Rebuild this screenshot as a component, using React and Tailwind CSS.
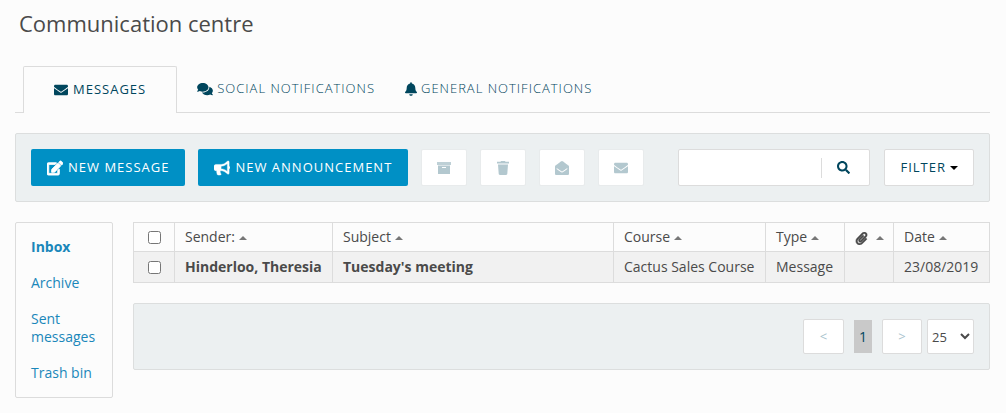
import { FaEnvelope, FaComments, FaBell, FaEdit, FaBullhorn, FaEnvelopeOpen, FaSearch, FaPaperclip } from "react-icons/fa";

const TABS = [
  { label: "Social notifications", Icon: FaComments, size: "w-4 h-3.5" },
  { label: "General notifications", Icon: FaBell, size: "w-3 h-3.5" },
];

const PRIMARY = [
  { label: "New message", Icon: FaEdit, look: "stroke-[28px]" },
  { label: "New announcement", Icon: FaBullhorn, look: "stroke-[14px]" },
];

const ACTIONS = [
  { label: "Archive", Icon: ArchiveBox },
  { label: "Delete", Icon: TrashCan },
  { label: "Mark as read", Icon: FaEnvelopeOpen },
  { label: "Mark as unread", Icon: FaEnvelope },
];

const COLUMNS = ["Sender:", "Subject", "Course", "Type", "clip", "Date"];

function ArchiveBox({ className }) {
  return (
    <svg className={className} viewBox="0 0 14 14" fill="currentColor" aria-hidden="true">
      <path d="M0 1h14v3H0z" opacity=".85" />
      <path fillRule="evenodd" d="M1 4.6h12V13H1zM5 6v1h4V6z" />
    </svg>
  );
}

function TrashCan({ className }) {
  return (
    <svg className={className} viewBox="0 0 14 14" fill="currentColor" aria-hidden="true">
      <path d="M4.5.8 5 0h4l.5.8H13v1.8H1V.8zM2 3.6h10l-.7 9.2c0 .7-.5 1.2-1.2 1.2H3.9c-.7 0-1.2-.5-1.2-1.2z" />
    </svg>
  );
}

function SortUp() {
  return (
    <svg className="ml-1 inline-block h-[5px] w-2 align-middle text-[#777]" viewBox="0 0 8 5" fill="currentColor" aria-hidden="true">
      <path d="M4 0 8 4H0z" />
    </svg>
  );
}

export default function App() {
  return (
    <main className="min-h-screen bg-[#fcfcfc] pt-[7px] pr-4 pb-4 pl-[15px] font-['Open_Sans',sans-serif] text-sm text-[#4a4a4a]">
      <h1 className="px-1 text-[22px] leading-8">Communication centre</h1>

      <nav className="mt-[27px] flex h-[47px] items-stretch border-b border-[#dcdcdc] pl-2 text-[13px] uppercase tracking-[1px] text-[#00465d]">
        <a href="#messages" aria-current="page" className="-mb-px flex items-center gap-[5px] rounded-t-xs border border-b-0 border-[#dcdcdc] bg-[#fcfcfc] px-[30px] pb-px">
          <FaEnvelope className="size-3.5" />
          Messages
        </a>
        <div className="flex gap-[30px] pl-5 font-light">
          {TABS.map(({ label, Icon, size }) => (
            <a key={label} href="#notifications" className="flex items-center gap-1 pb-px">
              <Icon className={size} />
              {label}
            </a>
          ))}
        </div>
      </nav>

      <section className="mt-5 flex items-center justify-between rounded-xs border border-[#dcdede] bg-[#ecf0f1] p-[15px]">
        <div className="flex items-center gap-[13px]">
          {PRIMARY.map(({ label, Icon, look }) => (
            <button key={label} type="button" className="flex h-[37px] items-center gap-[5px] rounded-xs bg-[#0090c5] px-4 text-[13px] font-medium uppercase tracking-[1px] text-white">
              <Icon className={`size-4 ${look}`} />
              {label}
            </button>
          ))}
          {ACTIONS.map(({ label, Icon }) => (
            <button key={label} type="button" aria-label={label} className="flex h-[37px] w-[46px] items-center justify-center rounded-xs border border-[#e8ebec] bg-white text-[#b3c8cf]">
              <Icon className="size-3.5" />
            </button>
          ))}
        </div>
        <div className="flex items-center gap-3.5">
          <div className="flex h-[37px] w-48 items-center rounded-xs border border-[#dcdcdc] bg-white">
            <input type="search" aria-label="Search messages" className="h-full min-w-0 flex-1 px-2 outline-none" />
            <button type="button" aria-label="Search" className="flex h-5 w-12 items-center justify-center border-l border-[#dcdcdc] pr-1 text-[#00465d]">
              <FaSearch className="size-[13px]" />
            </button>
          </div>
          <button type="button" className="flex h-[37px] items-center gap-1 rounded-xs border border-[#dcdcdc] bg-white px-[15px] text-[13px] uppercase tracking-[1px] text-[#00465d]">
            Filter
            <svg className="h-1 w-2 text-black" viewBox="0 0 8 4" fill="currentColor" aria-hidden="true">
              <path d="M0 0h8L4 4z" />
            </svg>
          </button>
        </div>
      </section>

      <div className="mt-5 flex items-start gap-5">
        <aside className="w-[98px] shrink-0 rounded-xs border border-[#dcdcdc] p-[15px] pr-2 leading-[18px] text-[#1a87ba]">
          <ul className="flex flex-col gap-[18px]">
            <li><a href="#inbox" className="font-bold">Inbox</a></li>
            <li><a href="#archive">Archive</a></li>
            <li><a href="#sent">Sent messages</a></li>
            <li><a href="#trash">Trash bin</a></li>
          </ul>
        </aside>

        <div className="min-w-0 flex-1">
          <table className="w-full table-fixed border-collapse text-left [&_td]:border [&_td]:border-[#dcdcdc] [&_td]:px-2.5 [&_th]:border [&_th]:border-[#dcdcdc] [&_th]:px-2.5 [&_th]:font-normal">
            <colgroup>
              <col className="w-[41px]" />
              <col className="w-[158px]" />
              <col />
              <col className="w-38" />
              <col className="w-[79px]" />
              <col className="w-[49px]" />
              <col className="w-24" />
            </colgroup>
            <thead>
              <tr className="h-[29px]">
                <th><input type="checkbox" aria-label="Select all messages" className="mx-auto block size-[13px]" /></th>
                {COLUMNS.map((column) => (
                  <th key={column} className="whitespace-nowrap">
                    {column === "clip" ? <FaPaperclip className="mr-1 inline size-[13px] stroke-[16px]" aria-label="Attachment" /> : column}
                    <SortUp />
                  </th>
                ))}
              </tr>
            </thead>
            <tbody>
              <tr className="h-[31px] whitespace-nowrap bg-[#f1f1f1]">
                <td><input type="checkbox" aria-label="Select Tuesday's meeting" className="mx-auto block size-[13px]" /></td>
                <td className="font-bold">Hinderloo, Theresia</td>
                <td className="font-bold">Tuesday's meeting</td>
                <td>Cactus Sales Course</td>
                <td>Message</td>
                <td />
                <td>23/08/2019</td>
              </tr>
            </tbody>
          </table>

          <div className="mt-5 flex items-center justify-end rounded-xs border border-[#dcdede] bg-[#ecf0f1] p-[15px] text-[13px]">
            <button type="button" aria-label="Previous page" className="h-[35px] w-[41px] rounded-xs border border-[#dcdcdc] bg-white text-[#a9c3cd]">&lt;</button>
            <span className="mx-2.5 flex h-[33px] w-[18px] items-center justify-center bg-[#c9c9c9] text-sm text-[#00465d]">1</span>
            <button type="button" aria-label="Next page" className="h-[35px] w-10 rounded-xs border border-[#dcdcdc] bg-white text-[#a9c3cd]">&gt;</button>
            <select aria-label="Messages per page" defaultValue="25" className="ml-[5px] h-[35px] w-[47px] rounded-xs border border-[#dcdcdc] bg-white text-[13px]">
              <option>25</option>
              <option>50</option>
            </select>
          </div>
        </div>
      </div>
    </main>
  );
}
